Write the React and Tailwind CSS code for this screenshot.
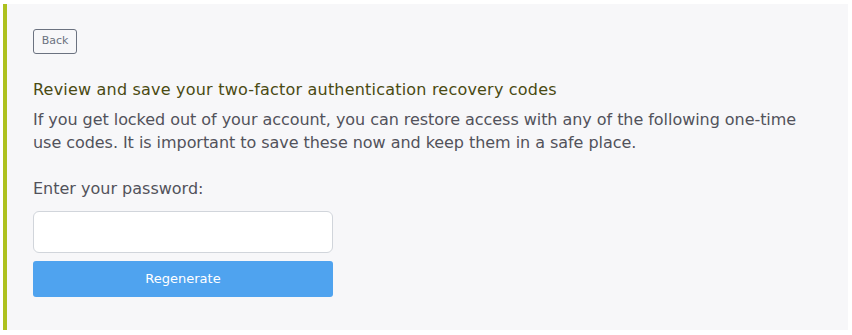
import React from "react";

const App = () => {
  return (
    <div
      className="w-[852px] h-[335px] bg-white pt-[4px] pl-[3px] pr-[4px] pb-[5px]"
      style={{ fontFamily: '"DejaVu Sans", "Noto Sans", sans-serif' }}
    >
      <div className="h-full bg-[#f7f7f9] border-l-4 border-[#adc11e] pl-[26px] pr-[26px] pt-[25px]">
        <button className="block h-[25px] w-[44px] border border-[#6b7280] rounded-[3px] text-[11px] text-[#6b7280] bg-transparent">
          Back
        </button>
        <h3 className="mt-[25px] text-[16px] leading-[22px] font-medium tracking-[0.2px] text-[#4a4a12]">
          Review and save your two-factor authentication recovery codes
        </h3>
        <p className="mt-[7px] text-[16px] leading-[23px] tracking-[-0.05px] text-[#52525b]">
          If you get locked out of your account, you can restore access with any of the following one-time
          <br />
          use codes. It is important to save these now and keep them in a safe place.
        </p>
        <label className="block mt-[24px] text-[16px] leading-[22px] text-[#52525b]">
          Enter your password:
        </label>
        <input
          type="password"
          className="block mt-[11px] w-[300px] h-[42px] bg-white border border-[#d1d5db] rounded-[6px] px-3 outline-none"
        />
        <button className="block mt-[8px] w-[300px] h-[36px] bg-[#4fa3ef] rounded-[3px] text-white text-[13px]">
          Regenerate
        </button>
      </div>
    </div>
  );
};

export default App;
